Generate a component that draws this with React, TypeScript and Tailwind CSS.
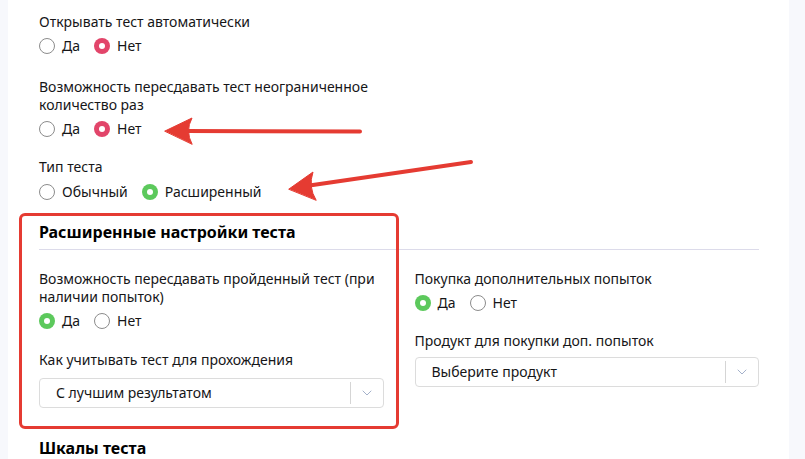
import { ChevronDown } from "lucide-react"

type Option = { label: string; value: string }

function Radio({ checked, tone }: { checked: boolean; tone: "red" | "green" }) {
  if (!checked) {
    return <span className="h-4 w-4 shrink-0 rounded-full border border-[#8c8c8c] bg-white" />
  }
  return (
    <span
      className={
        "flex h-4 w-4 shrink-0 items-center justify-center rounded-full " +
        (tone === "red" ? "bg-[#e2456a]" : "bg-[#5cc95c]")
      }
    >
      <span className="h-[6px] w-[6px] rounded-full bg-white" />
    </span>
  )
}

function RadioGroup({
  options,
  value,
  tone,
}: {
  options: Option[]
  value: string
  tone: "red" | "green"
}) {
  return (
    <div className="mt-[5px] flex h-5 items-center gap-[14px]">
      {options.map((o) => (
        <label key={o.value} className="flex items-center gap-[7px]">
          <Radio checked={o.value === value} tone={tone} />
          <span>{o.label}</span>
        </label>
      ))}
    </div>
  )
}

function Select({ text }: { text: string }) {
  return (
    <div className="flex h-[30px] items-center rounded-[4px] border border-[#dcdcdc] bg-white">
      <span className="flex-1 pl-4">{text}</span>
      <span className="h-[22px] w-px bg-[#d5d5d5]" />
      <span className="flex w-8 items-center justify-center text-[#8d9dbd]">
        <ChevronDown size={16} strokeWidth={1.2} />
      </span>
    </div>
  )
}

const yesNo: Option[] = [
  { label: "Да", value: "yes" },
  { label: "Нет", value: "no" },
]

export default function App() {
  return (
    <div
      className="relative flex h-[459px] w-[805px] overflow-hidden bg-[#f7f8fc] text-[14px] leading-[18px] text-[#161618]"
      style={{ fontFamily: '"Noto Sans", "Open Sans", sans-serif' }}
    >
      <div className="ml-2 w-[781px] bg-white pl-[31px] pt-[13px]">
        <div className="w-[344px]">
          <div>Открывать тест автоматически</div>
          <RadioGroup options={yesNo} value="no" tone="red" />

          <div className="mt-[22px]">Возможность пересдавать тест неограниченное количество раз</div>
          <RadioGroup options={yesNo} value="no" tone="red" />

          <div className="mt-[19px]">Тип теста</div>
          <div className="pt-px">
            <RadioGroup
              options={[
                { label: "Обычный", value: "basic" },
                { label: "Расширенный", value: "extended" },
              ]}
              value="extended"
              tone="green"
            />
          </div>
        </div>

        {/* extended settings */}
        <div className="mt-[19px] w-[720px]">
          <h3 className="pb-[6px] text-[16px] font-bold leading-[22px] text-black">
            Расширенные настройки теста
          </h3>
          <div className="h-px bg-[#dcdbea]" />

          <div className="mt-[20px] grid grid-cols-2 gap-[31px]">
            <div>
              <div>Возможность пересдавать пройденный тест (при наличии попыток)</div>
              <RadioGroup options={yesNo} value="yes" tone="green" />
              <div className="mt-[20px]">Как учитывать тест для прохождения</div>
              <div className="mt-[9px]">
                <Select text="С лучшим результатом" />
              </div>
            </div>
            <div>
              <div>Покупка дополнительных попыток</div>
              <RadioGroup options={yesNo} value="yes" tone="green" />
              <div className="mt-[19px]">Продукт для покупки доп. попыток</div>
              <div className="mt-[7px]">
                <Select text="Выберите продукт" />
              </div>
            </div>
          </div>
        </div>

        <h3 className="mt-[29px] text-[16px] font-bold leading-[22px] text-black">Шкалы теста</h3>
      </div>

      {/* annotation frame */}
      <div className="pointer-events-none absolute left-[19px] top-[213px] h-[216px] w-[380px] rounded-[6px] border-[3px] border-[#e53b32]" />

      {/* annotation arrows */}
      <svg className="pointer-events-none absolute inset-0" width="805" height="459" viewBox="0 0 805 459">
        <g fill="#e53b32" stroke="#e53b32" strokeLinecap="round" strokeLinejoin="round">
          <line x1="360" y1="131.5" x2="185" y2="131" strokeWidth="4" />
          <path d="M165 131 L192 118 Q185 131 192 144 Z" strokeWidth="1" />
          <line x1="471" y1="162" x2="306" y2="186" strokeWidth="4" />
          <path d="M289 189 L313 172 Q308 187 316 200 Z" strokeWidth="1" />
        </g>
      </svg>
    </div>
  )
}
